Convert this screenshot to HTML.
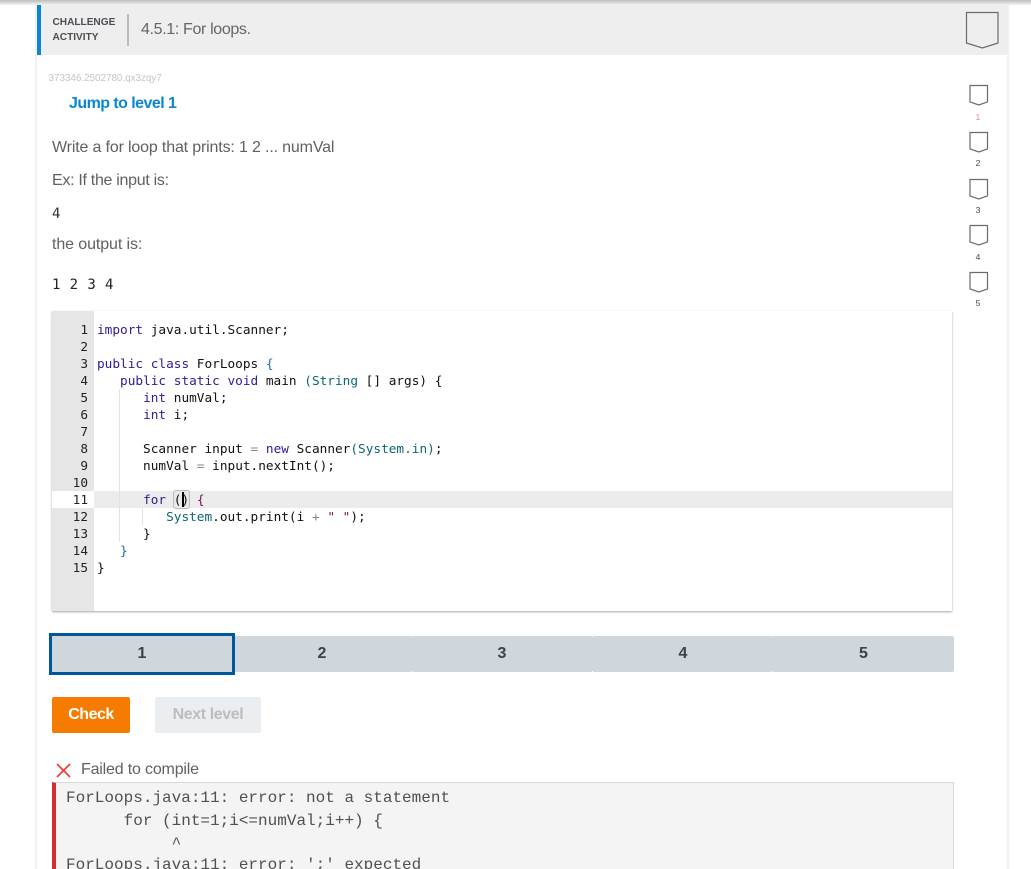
<!DOCTYPE html>
<html>
<head>
<meta charset="utf-8">
<style>
html,body{margin:0;padding:0;background:#fff;overflow:hidden;}
body{width:1031px;height:869px;font-family:"Liberation Sans",sans-serif;}
#w{position:relative;width:1031px;height:869px;overflow:hidden;}
.a{position:absolute;white-space:pre;}
.p{font-size:16px;color:#606060;line-height:20px;left:52px;}
.m{font-family:"DejaVu Sans Mono",monospace;font-size:12.75px;line-height:17px;}
.ln{left:54px;width:34px;text-align:right;color:#222;}
.c{left:97px;color:#111;}
.k{color:#2c2196}.t{color:#0b6672}.b{color:#1a6fa8}.q{color:#7a1050}.o{color:#7a8a96}
.e{font-family:"Liberation Mono",monospace;font-size:16px;color:#505050;left:66px;line-height:20px;}
.n{top:636px;height:36px;line-height:36px;text-align:center;font-weight:bold;font-size:16px;color:#3b4249;}
.s{font-size:8.5px;color:#445;left:960px;width:36px;text-align:center;line-height:10px;}
</style>
</head>
<body>
<div id="w">
<div class="a" style="left:0;top:0;width:1031px;height:5px;background:linear-gradient(#bdbdbd,#f4f4f4);"></div>
<div class="a" style="left:35px;top:5px;width:2px;height:864px;background:#f1f1f1;"></div>
<div class="a" style="left:1007px;top:5px;width:2px;height:864px;background:#f1f1f1;"></div>

<div class="a" style="left:37px;top:5px;width:971px;height:50px;background:#eeeeee;"></div>
<div class="a" style="left:37px;top:5px;width:4px;height:50px;background:#0b86d1;"></div>
<div class="a" style="left:52.5px;top:14.5px;font-size:10.1px;font-weight:bold;color:#4a4f55;line-height:15px;">CHALLENGE
ACTIVITY</div>
<div class="a" style="left:127px;top:14px;width:2px;height:32px;background:#bcbcbc;"></div>
<div class="a" style="left:141px;top:20px;font-size:16px;letter-spacing:-.35px;color:#62676c;line-height:20px;">4.5.1: For loops.</div>

<svg class="a" style="left:965px;top:11px;" width="36" height="39" viewBox="0 0 36 39"><path d="M1.5 1.5H33V32L17.3 37L1.5 32Z" fill="none" stroke="#6b6b6b" stroke-width="1.2"/></svg>
<svg class="a" style="left:969px;top:84px;" width="20" height="23" viewBox="0 0 20 23"><path d="M1 1.5H18.5V18L9.8 21L1 18Z" fill="none" stroke="#6b6b6b" stroke-width="1.2"/></svg>
<svg class="a" style="left:969px;top:131px;" width="20" height="23" viewBox="0 0 20 23"><path d="M1 1.5H18.5V18L9.8 21L1 18Z" fill="none" stroke="#6b6b6b" stroke-width="1.2"/></svg>
<svg class="a" style="left:969px;top:178px;" width="20" height="23" viewBox="0 0 20 23"><path d="M1 1.5H18.5V18L9.8 21L1 18Z" fill="none" stroke="#6b6b6b" stroke-width="1.2"/></svg>
<svg class="a" style="left:969px;top:224px;" width="20" height="23" viewBox="0 0 20 23"><path d="M1 1.5H18.5V18L9.8 21L1 18Z" fill="none" stroke="#6b6b6b" stroke-width="1.2"/></svg>
<svg class="a" style="left:969px;top:271px;" width="20" height="23" viewBox="0 0 20 23"><path d="M1 1.5H18.5V18L9.8 21L1 18Z" fill="none" stroke="#6b6b6b" stroke-width="1.2"/></svg>
<div class="a s" style="top:112px;color:#e88;">1</div>
<div class="a s" style="top:158px;">2</div>
<div class="a s" style="top:205px;">3</div>
<div class="a s" style="top:252px;">4</div>
<div class="a s" style="top:298px;">5</div>

<div class="a" style="left:48.5px;top:72.5px;font-size:9.85px;color:#c4c4c4;line-height:12px;">373346.2502780.qx3zqy7</div>
<div class="a" style="left:69px;top:93.5px;font-size:16px;letter-spacing:-.55px;font-weight:bold;color:#0b86d1;line-height:20px;">Jump to level 1</div>
<div class="a p" style="top:138px;letter-spacing:-.16px;">Write a for loop that prints: 1 2 ... numVal</div>
<div class="a p" style="top:171px;letter-spacing:-.3px;">Ex: If the input is:</div>
<div class="a m" style="left:52px;top:206px;font-size:14px;color:#333;">4</div>
<div class="a p" style="top:235px;letter-spacing:-.1px;">the output is:</div>
<div class="a m" style="left:52px;top:277px;font-size:14px;color:#222;word-spacing:.8px;">1 2 3 4</div>

<div class="a" style="left:52px;top:311px;width:900px;height:300px;background:#fff;box-shadow:0 1px 2px rgba(0,0,0,.35);"></div>
<div class="a" style="left:52px;top:311px;width:42px;height:300px;background:#e6e6e6;"></div>
<div class="a" style="left:52px;top:491px;width:42px;height:17px;background:#fff;"></div>
<div class="a" style="left:94px;top:491px;width:858px;height:17px;background:#ececec;"></div>
<div class="a" style="left:119px;top:389px;width:1px;height:153px;background:#e2e2e2;"></div>
<div class="a" style="left:142px;top:508px;width:1px;height:17px;background:#e2e2e2;"></div>
<div class="a" style="left:173px;top:490px;width:15px;height:17px;border:1px solid #bdbdbd;border-radius:3px;background:#e8e8e8;"></div>

<div class="a m ln" style="top:322px;">1</div>
<div class="a m ln" style="top:339px;">2</div>
<div class="a m ln" style="top:356px;">3</div>
<div class="a m ln" style="top:373px;">4</div>
<div class="a m ln" style="top:390px;">5</div>
<div class="a m ln" style="top:407px;">6</div>
<div class="a m ln" style="top:424px;">7</div>
<div class="a m ln" style="top:441px;">8</div>
<div class="a m ln" style="top:458px;">9</div>
<div class="a m ln" style="top:475px;">10</div>
<div class="a m ln" style="top:492px;">11</div>
<div class="a m ln" style="top:509px;">12</div>
<div class="a m ln" style="top:526px;">13</div>
<div class="a m ln" style="top:543px;">14</div>
<div class="a m ln" style="top:560px;">15</div>

<div class="a m c" style="top:322px;"><span class="k">import</span> java.util.Scanner;</div>
<div class="a m c" style="top:356px;"><span class="k">public class</span> ForLoops <span class="b">{</span></div>
<div class="a m c" style="top:373px;">   <span class="k">public static void</span> main <span class="t">(String</span> [] args) {</div>
<div class="a m c" style="top:390px;">      <span class="k">int</span> numVal;</div>
<div class="a m c" style="top:407px;">      <span class="k">int</span> i;</div>
<div class="a m c" style="top:441px;">      Scanner input <span class="o">=</span> <span class="k">new</span> Scanner<span class="t">(System.in)</span>;</div>
<div class="a m c" style="top:458px;">      numVal <span class="o">=</span> input.nextInt();</div>
<div class="a m c" style="top:492px;">      <span class="k">for</span> () <span class="q">{</span></div>
<div class="a m c" style="top:509px;">         <span class="t">System</span>.out.print(i <span class="o">+</span> <span class="q">" "</span>);</div>
<div class="a m c" style="top:526px;">      }</div>
<div class="a m c" style="top:543px;">   <span class="b">}</span></div>
<div class="a m c" style="top:560px;">}</div>
<div class="a" style="left:182px;top:492px;width:2px;height:15px;background:#000;"></div>

<div class="a" style="left:52px;top:636px;width:902px;height:36px;background:#cfd6dc;border-radius:2px;"></div>
<div class="a" style="left:411px;top:636px;width:1px;height:36px;background:linear-gradient(#fff 1px,transparent 1px,transparent 35px,#fff 35px);"></div>
<div class="a" style="left:592px;top:636px;width:1px;height:36px;background:linear-gradient(#fff 1px,transparent 1px,transparent 35px,#fff 35px);"></div>
<div class="a" style="left:772px;top:636px;width:1px;height:36px;background:linear-gradient(#fff 1px,transparent 1px,transparent 35px,#fff 35px);"></div>
<div class="a" style="left:49px;top:633px;width:180px;height:36px;border:3px solid #01579b;background:#cfd6dc;"></div>
<div class="a n" style="left:52px;width:180px;">1</div>
<div class="a n" style="left:232px;width:180px;">2</div>
<div class="a n" style="left:412px;width:180px;">3</div>
<div class="a n" style="left:593px;width:180px;">4</div>
<div class="a n" style="left:773px;width:181px;">5</div>

<div class="a" style="left:52px;top:697px;width:78px;height:36px;background:#f57c00;border-radius:2px;color:#fff;font-weight:bold;font-size:16px;line-height:36px;text-align:center;letter-spacing:-.5px;">Check</div>
<div class="a" style="left:155px;top:697px;width:106px;height:36px;background:#ebeef1;border-radius:2px;color:#bdbdbd;font-weight:bold;font-size:16px;line-height:36px;text-align:center;letter-spacing:-.4px;">Next level</div>

<svg class="a" style="left:56px;top:763px;" width="16" height="16" viewBox="0 0 16 16"><path d="M1 1L14 14M14 1L1 14" stroke="#ee3b3b" stroke-width="1.7" fill="none"/></svg>
<div class="a" style="left:81px;top:760px;font-size:16px;letter-spacing:-.18px;color:#606060;line-height:20px;">Failed to compile</div>

<div class="a" style="left:52px;top:782px;width:897px;height:100px;background:#f4f4f4;border:1px solid #d8d8d8;border-left:4px solid #d32f2f;"></div>
<div class="a e" style="top:788px;">ForLoops.java:11: error: not a statement</div>
<div class="a e" style="top:811px;">      for (int=1;i&lt;=numVal;i++) {</div>
<div class="a e" style="top:834px;">           ^</div>
<div class="a e" style="top:855px;">ForLoops.java:11: error: ';' expected</div>
</div>
</body>
</html>
